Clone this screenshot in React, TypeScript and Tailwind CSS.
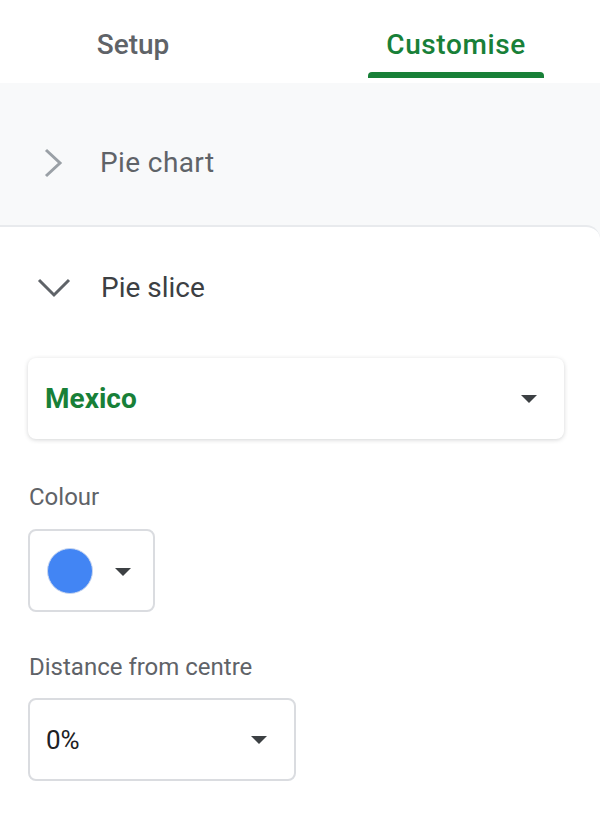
import React from "react";

function Caret({ className = "" }: { className?: string }) {
  return (
    <svg width="16" height="8" viewBox="0 0 16 8" className={className}>
      <polygon points="0,0 16,0 8,8" fill="#3c4043" />
    </svg>
  );
}

export default function App() {
  return (
    <div
      className="w-[606px] h-[814px] bg-white overflow-hidden"
      style={{ fontFamily: "Roboto, 'Noto Sans', sans-serif" }}
    >
      {/* Tabs */}
      <div className="h-[83px] flex items-end">
        <div className="w-[266px] h-full flex items-start pt-[28px] justify-center">
          <span className="text-[28px] leading-[34px] font-medium text-[#5f6368]">Setup</span>
        </div>
        <div className="ml-[102px] w-[176px] h-full flex flex-col items-center pt-[28px]">
          <span className="text-[28px] leading-[34px] font-medium text-[#188038] tracking-[0.6px]">
            Customise
          </span>
          <div className="mt-auto mb-[5px] h-[6px] w-full bg-[#188038] rounded-t-[4px]" />
        </div>
      </div>

      {/* Collapsed section */}
      <div className="w-[600px] h-[142px] bg-[#f8f9fa] flex items-center pt-[18px] pl-[43px]">
        <svg width="22" height="30" viewBox="0 0 22 30" fill="none">
          <path d="M3 2 L17 15 L3 28" stroke="#9aa0a6" strokeWidth="3" />
        </svg>
        <span className="ml-[35px] text-[28px] leading-[34px] tracking-[0.4px] text-[#5f6368]">
          Pie chart
        </span>
      </div>

      {/* Expanded section card */}
      <div className="w-[600px] bg-[#f8f9fa]">
        <div className="bg-white border-t-2 border-[#e8eaed] rounded-tr-[14px] pb-10">
          <div className="h-[131px] flex items-start pt-[44px] pl-[37px]">
            <svg width="34" height="20" viewBox="0 0 34 20" fill="none" className="mt-[7px]">
              <path d="M2 2 L17 17 L32 2" stroke="#5f6368" strokeWidth="3" />
            </svg>
            <span className="ml-[30px] text-[28px] leading-[34px] text-[#3c4043]">Pie slice</span>
          </div>

          <div className="ml-[28px] w-[536px] h-[81px] rounded-[8px] bg-white shadow-[0_1px_4px_rgba(60,64,67,0.22)] flex items-center pl-[17px] pr-[27px]">
            <span className="text-[28px] leading-[34px] font-bold text-[#188038]">Mexico</span>
            <Caret className="ml-auto" />
          </div>

          <div className="ml-[29px] mt-[44px] text-[24px] leading-[28px] text-[#5f6368]">Colour</div>

          <div className="ml-[28px] mt-[18px] w-[127px] h-[83px] border-2 border-[#dadce0] rounded-[8px] flex items-center pl-[17px]">
            <div className="w-[46px] h-[46px] rounded-full bg-[#4285f4] border border-[#c8d6f0]" />
            <Caret className="ml-[22px] mt-[2px]" />
          </div>

          <div className="ml-[29px] mt-[41px] text-[24px] leading-[28px] text-[#5f6368]">
            Distance from centre
          </div>

          <div className="ml-[28px] mt-[17px] w-[268px] h-[83px] border-2 border-[#dadce0] rounded-[8px] flex items-center pl-[16px] pr-[27px]">
            <span className="text-[26px] leading-[32px] text-[#202124]">0%</span>
            <Caret className="ml-auto" />
          </div>
        </div>
      </div>
    </div>
  );
}
